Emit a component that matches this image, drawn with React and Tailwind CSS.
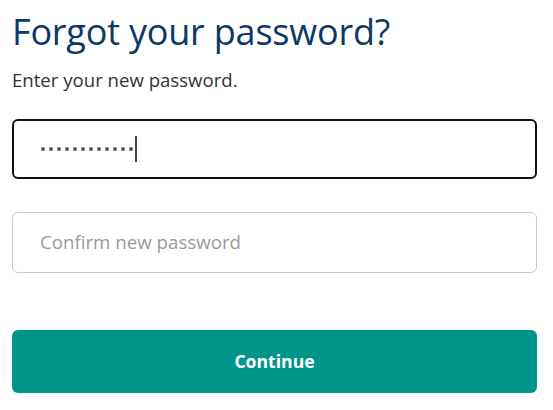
import React from "react";

export default function App() {
  const font = { fontFamily: '"Open Sans", "Noto Sans", "Liberation Sans", sans-serif' };
  return (
    <div className="w-[553px] h-[410px] bg-white pl-[12px] pr-[16px] pt-[8px]" style={font}>
      <h1 className="text-[36px] leading-[48px] text-[#0b3a66] font-normal tracking-[-0.2px]">
        Forgot your password?
      </h1>
      <p className="mt-[12px] text-[18.6px] leading-[24px] text-[#333]">Enter your new password.</p>
      <div className="mt-[27px] h-[60px] rounded-[6px] border-2 border-[#111] flex items-center pl-[27px]">
        <div className="flex items-center gap-[4px]">
          {Array.from({ length: 12 }).map((_, i) => (
            <span key={i} className="w-[4px] h-[4px] rounded-full bg-[#555]" />
          ))}
        </div>
        <span className="ml-[2px] w-[2px] h-[26px] bg-[#444]" />
      </div>
      <div className="mt-[33px] h-[61px] rounded-[6px] border border-[#c8c8c8] flex items-center pl-[27px]">
        <span className="text-[18.7px] text-[#9a9a9a]">Confirm new password</span>
      </div>
      <button className="mt-[57px] w-full h-[63px] rounded-[6px] bg-[#00958c] text-white text-[17.6px] font-bold flex items-center justify-center">
        Continue
      </button>
    </div>
  );
}
